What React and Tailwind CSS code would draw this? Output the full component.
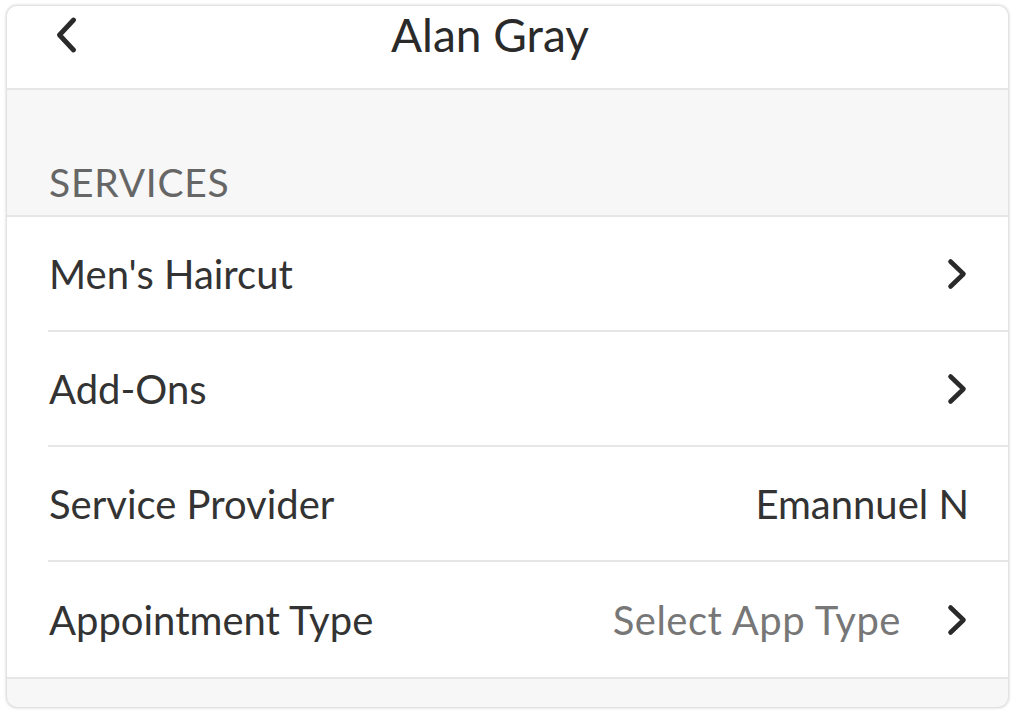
import React from 'react';

const ChevronRight = ({ className = '' }) => (
  <svg viewBox="0 0 20 32" className={className} fill="none" stroke="currentColor" strokeWidth="4.6" strokeLinecap="round" strokeLinejoin="round">
    <path d="M3.5 3.5L16.5 16 3.5 28.5" />
  </svg>
);

const ChevronLeft = ({ className = '' }) => (
  <svg viewBox="0 0 21 36" className={className} fill="none" stroke="currentColor" strokeWidth="4.8" strokeLinecap="round" strokeLinejoin="round">
    <path d="M17.5 3L3.5 18l14 15" />
  </svg>
);

const rows = [
  { label: "Men's Haircut", chevron: true },
  { label: 'Add-Ons', chevron: true },
  { label: 'Service Provider', value: 'Emannuel N', valueClass: 'text-[#333] -mr-[2px]' },
  { label: 'Appointment Type', value: 'Select App Type', valueClass: 'text-[#777] tracking-[0.5px]', chevron: true },
];

export default function App() {
  return (
    <div className="w-[1015px] h-[714px] bg-white pt-[6px] pb-[7px] pl-[7px] pr-[7px]" style={{ fontFamily: 'Lato, "Open Sans", sans-serif' }}>
      <div className="h-full rounded-[10px] overflow-hidden bg-[#f7f7f7] shadow-[0_0_3px_1px_rgba(0,0,0,0.18)] flex flex-col">
        {/* Header */}
        <div className="h-[84px] bg-white border-b-2 border-[#e6e6e6] flex items-start pt-[1px] relative shrink-0">
          <ChevronLeft className="absolute left-[49px] top-[11px] w-[21px] h-[36px] text-[#2a2a2a]" />
          <div className="w-full text-center text-[46px] leading-[56px] text-[#2a2a2a] pr-[35px]">Alan Gray</div>
        </div>

        {/* Section header */}
        <div className="h-[127px] flex items-end pl-[42px] pb-[13px] border-b-2 border-[#e6e6e6] shrink-0">
          <span className="text-[39px] leading-[40px] text-[#666] tracking-[0.75px]">SERVICES</span>
        </div>

        {/* Rows */}
        <div className="bg-white border-b-2 border-[#e6e6e6] shrink-0">
          {rows.map((r, i) => (
            <div key={r.label} className="pl-[41px]">
              <div className={`h-[115px] flex items-center pr-[41px] ${i < rows.length - 1 ? 'border-b-2 border-[#e6e6e6]' : ''}`}>
                <span className="flex-1 text-[40px] text-[#333] pl-[1px]">{r.label}</span>
                {r.value && <span className={`text-[40px] ${r.valueClass}`}>{r.value}</span>}
                {r.chevron && <ChevronRight className="ml-[46px] w-[20px] h-[32px] text-[#2a2a2a]" />}
              </div>
            </div>
          ))}
        </div>
      </div>
    </div>
  );
}
